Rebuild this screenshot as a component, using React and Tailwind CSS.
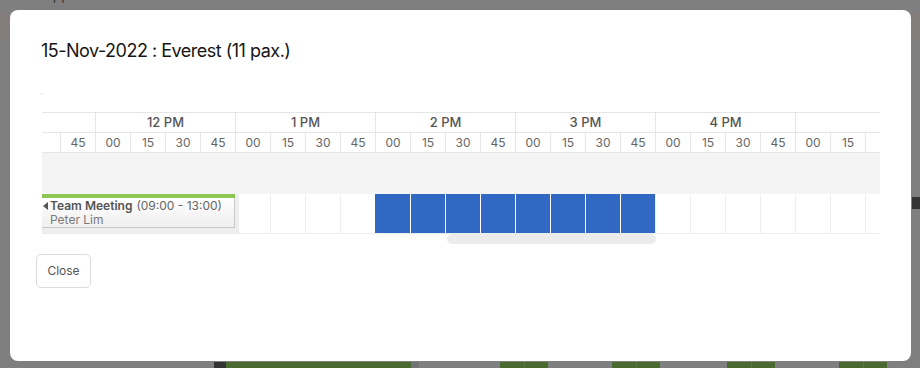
export default function App() {
  const hours = ['', '12 PM', '1 PM', '2 PM', '3 PM', '4 PM', ''];
  const minutes = [];
  hours.forEach((h, hi) => {
    ['00', '15', '30', '45'].forEach((m, mi) => {
      let label = m;
      if (hi === 0 && mi < 3) label = '';
      if (hi === 6 && mi > 1) label = '';
      minutes.push(label);
    });
  });
  // event row cells after the gray block (starting at 1:15)
  const eventCells = [];
  for (let i = 0; i < 19; i++) {
    eventCells.push(i >= 3 && i < 11 ? 'blue' : 'white');
  }

  return (
    <div className="relative w-[920px] h-[368px] overflow-hidden bg-[#7f7f7f] font-['Inter','Noto_Sans',sans-serif]">
      {/* background page (behind overlay) */}
      <div className="flex flex-col h-full">
        <div className="h-[27px] pl-[43px] -mt-[13px] text-[14px] text-[#333] leading-[16px]">App</div>
        <div className="h-[26px] bg-[#857d79]" />
        <div className="h-[157px]" />
        <div className="h-[12px] flex justify-end">
          <div className="w-[8px] bg-[#333]" />
        </div>
        <div className="flex-1" />
        <div className="h-[6px] flex">
          <div className="w-[214px]" />
          <div className="w-[12px] bg-[#333]" />
          <div className="w-[185px] bg-[#4b6a2f]" />
          <div className="w-[8px] bg-[#737373]" />
          <div className="w-[81px]" />
          <div className="w-[25px] bg-[#4b6a2f] border-r border-[#5a7440]" />
          <div className="w-[23px] bg-[#4b6a2f]" />
          <div className="w-[64px]" />
          <div className="w-[25px] bg-[#4b6a2f] border-r border-[#5a7440]" />
          <div className="w-[23px] bg-[#4b6a2f]" />
          <div className="w-[67px]" />
          <div className="w-[25px] bg-[#4b6a2f] border-r border-[#5a7440]" />
          <div className="w-[23px] bg-[#4b6a2f]" />
          <div className="w-[64px]" />
          <div className="w-[25px] bg-[#4b6a2f] border-r border-[#5a7440]" />
          <div className="w-[23px] bg-[#4b6a2f]" />
        </div>
      </div>

      {/* modal overlay */}
      <div className="absolute left-[10px] top-[10px] w-[901px] h-[351px] bg-white rounded-[8px] pt-[27px] px-[26px] flex flex-col">
        <h2 className="ml-[5px] h-[27px] text-[18px] leading-[27px] text-[#161616] font-normal tracking-[-0.5px]">
          15-Nov-2022 : Everest (11 pax.)
        </h2>
        <div className="ml-[5px] mt-[29px] w-[1px] h-[2px] bg-[#e2e2e2]" />
        <div className="ml-[6px] mt-[17px] w-[838px] overflow-hidden">
          <div className="ml-[-87px] w-[980px]">
            {/* hour row */}
            <div className="flex h-[21px] border-y border-[#e6e6e6]">
              {hours.map((h, i) => (
                <div
                  key={i}
                  className="w-[140px] shrink-0 border-l border-[#e6e6e6] flex items-center justify-center text-[13px] font-medium text-[#555]"
                >
                  {h}
                </div>
              ))}
            </div>
            {/* minute row */}
            <div className="flex h-[20px] border-b border-[#e6e6e6]">
              {minutes.map((m, i) => (
                <div
                  key={i}
                  className="w-[35px] shrink-0 border-l border-[#e6e6e6] flex items-center justify-center text-[12px] text-[#666]"
                >
                  {m}
                </div>
              ))}
            </div>
            {/* gray band */}
            <div className="h-[41px] bg-[#f4f4f4]" />
            {/* event row */}
            <div className="flex h-[40px] border-b border-[#ececec]">
              <div className="w-[284px] shrink-0 bg-[#eeeeee]">
                <div className="ml-[87px] w-[193px] h-[34px] border-t-[4px] border-[#8cc751] flex flex-col">
                  <div className="flex-1 bg-gradient-to-b from-white to-[#efefef] border-r border-b border-[#c9c9c9] pl-[1px] text-[12px] leading-[14px] text-[#666] flex flex-col justify-center">
                    <div className="flex items-center whitespace-nowrap h-[14px]">
                      <svg width="5" height="8" viewBox="0 0 5 8" className="mr-[2px] shrink-0">
                        <path d="M5 0 L0 4 L5 8 Z" fill="#555" />
                      </svg>
                      <span className="font-semibold text-[#555]">Team Meeting</span>
                      <span className="ml-[4px]">(09:00 - 13:00)</span>
                    </div>
                    <div className="pl-[7px] h-[14px] text-[#7a7a7a]">Peter Lim</div>
                  </div>
                </div>
              </div>
              <div className="w-[31px] shrink-0 bg-white" />
              {eventCells.map((c, i) => (
                <div
                  key={i}
                  className={
                    c === 'blue'
                      ? i === 3
                        ? 'w-[35px] shrink-0 bg-[#3068c4] border-l border-[#3068c4]'
                        : 'w-[35px] shrink-0 bg-[#3068c4] border-l border-white'
                      : 'w-[35px] shrink-0 bg-white border-l border-[#efefef]'
                  }
                />
              ))}
            </div>
          </div>
          {/* scrollbar */}
          <div className="h-[10px]">
            <div className="ml-[405px] w-[209px] h-[10px] rounded-full bg-[#ececec]" />
          </div>
        </div>
        <div className="mt-[10px]">
          <button className="w-[55px] h-[34px] rounded-[5px] border border-[#dcdcdc] bg-white text-[12px] text-[#555]">
            Close
          </button>
        </div>
      </div>
    </div>
  );
}
